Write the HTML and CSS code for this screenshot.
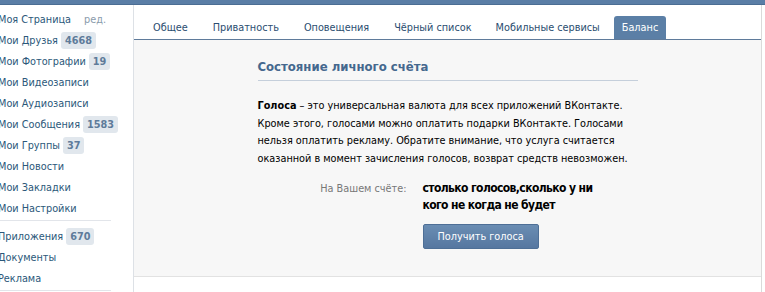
FILE: index.html
```html
<!DOCTYPE html>
<html lang="ru">

<head>
    <meta charset="UTF-8">
    <title>Настройки — Баланс</title>
    <link rel="stylesheet" href="styles.css">
</head>

<body>
    <div id="topbar"></div>
    <div id="layout">
        <div id="sidebar">
            <ul class="menu">
                <li><a href="#">Моя Страница</a><span class="edit">ред.</span></li>
                <li><a href="#">Мои Друзья</a><span class="count">4668</span></li>
                <li><a href="#">Мои Фотографии</a><span class="count">19</span></li>
                <li><a href="#">Мои Видеозаписи</a></li>
                <li><a href="#">Мои Аудиозаписи</a></li>
                <li><a href="#">Мои Сообщения</a><span class="count">1583</span></li>
                <li><a href="#">Мои Группы</a><span class="count">37</span></li>
                <li><a href="#">Мои Новости</a></li>
                <li><a href="#">Мои Закладки</a></li>
                <li><a href="#">Мои Настройки</a></li>
            </ul>
            <ul class="menu more">
                <li><a href="#">Приложения</a><span class="count">670</span></li>
                <li><a href="#">Документы</a></li>
                <li><a href="#">Реклама</a></li>
            </ul>
        </div>

        <div id="main">
            <div id="tabs">
                <a class="tab" href="#">Общее</a>
                <a class="tab" href="#">Приватность</a>
                <a class="tab" href="#">Оповещения</a>
                <a class="tab" href="#">Чёрный список</a>
                <a class="tab" href="#">Мобильные сервисы</a>
                <a class="tab active" href="#">Баланс</a>
            </div>

            <div id="panel">
                <div class="block">
                    <h2>Состояние личного счёта</h2>
                    <p class="info"><b>Голоса</b> – это универсальная валюта для всех приложений ВКонтакте.
                        Кроме этого, голосами можно оплатить подарки ВКонтакте. Голосами нельзя оплатить рекламу.
                        Обратите внимание, что услуга считается оказанной в момент зачисления голосов, возврат
                        средств невозможен.</p>
                    <div class="row">
                        <div class="label">На Вашем счёте:</div>
                        <div class="value">столько голосов,сколько у ни кого не когда не будет</div>
                    </div>
                    <div class="row">
                        <div class="label"></div>
                        <div><button id="buy">Получить голоса</button></div>
                    </div>
                </div>
            </div>

            <div class="block below">
                <p>Для того, чтобы получить голоса, выберите подходящий способ оплаты ниже.</p>
            </div>
        </div>
    </div>
</body>

</html>
```

FILE: styles.css
```css
body {
    margin: 0;
    background-color: white;
    font-family: 'DejaVu Sans Condensed', 'DejaVu Sans', Tahoma, sans-serif;
    font-stretch: condensed;
    font-size: 10.8px;
    overflow: hidden;
}

a {
    text-decoration: none;
}

#topbar {
    height: 4px;
    background-color: #5a7ea6;
    border-bottom: 1px solid #4b6d93;
}

#layout {
    display: flex;
    width: 762px;
}

/* left menu */

#sidebar {
    width: 135px;
    margin-left: -2px;
    border-right: 1px solid #dde1e6;
    padding-top: 4px;
    flex-shrink: 0;
    white-space: nowrap;
}

.menu {
    list-style: none;
    margin: 0;
    padding: 0 0 1px 0;
    width: 113px;
    border-bottom: 1px solid #e2e5ea;
}

.menu.more {
    padding-top: 5px;
}

.menu li {
    height: 21px;
    display: flex;
    align-items: center;
}

.menu a {
    color: #2b587a;
}

.edit {
    color: #8a9bab;
    margin-left: 13px;
}

.count {
    background-color: #e1e7ed;
    color: #5e7b9a;
    font-weight: bold;
    border-radius: 3px;
    padding: 2px 4px;
    margin-left: 3px;
    line-height: 13px;
}

/* content */

#main {
    flex: 1;
    border-right: 1px solid #dadada;
}

#tabs {
    display: flex;
    align-items: flex-end;
    height: 34px;
    padding-left: 11px;
    border-bottom: 1px solid #5f7b9b;
}

.tab {
    color: #2b4d70;
    padding: 0 8px;
    margin-right: 9px;
    height: 23px;
    line-height: 23px;
    border-radius: 3px 3px 0 0;
}

.tab:nth-child(4) {
    margin-right: 8px;
}

.tab.active {
    background-color: #5b7fa6;
    color: white;
    margin-left: -3px;
}

#panel {
    background-color: #f7f7f7;
    border-bottom: 1px solid #e2e2e2;
    padding: 19px 0 27px 0;
}

.block {
    width: 380px;
    margin: 0 auto;
}

h2 {
    margin: 0;
    font-size: 13px;
    font-weight: bold;
    color: #45688e;
    padding: 0 0 6px 0;
    border-bottom: 1px solid #c5cfdb;
}

.info {
    margin: 16px 0 13px 0;
    line-height: 17.5px;
    color: black;
}

.row {
    display: flex;
    gap: 16px;
    margin-bottom: 10px;
}

.row:last-child {
    margin-bottom: 0;
}

.label {
    width: 149px;
    text-align: right;
    color: #777;
    padding-top: 2px;
}

.value {
    width: 175px;
    font-size: 12px;
    letter-spacing: -0.6px;
    font-weight: bold;
    line-height: 17px;
    color: black;
}

#buy {
    font-family: inherit;
    font-stretch: condensed;
    font-size: 10.8px;
    color: white;
    background: linear-gradient(#6a8db3, #5677a0);
    border: 1px solid #4e6f96;
    border-radius: 2px;
    height: 25px;
    padding: 0 14px;
}

.below p {
    margin: 15px 0 0 0;
    font-weight: bold;
}
```
